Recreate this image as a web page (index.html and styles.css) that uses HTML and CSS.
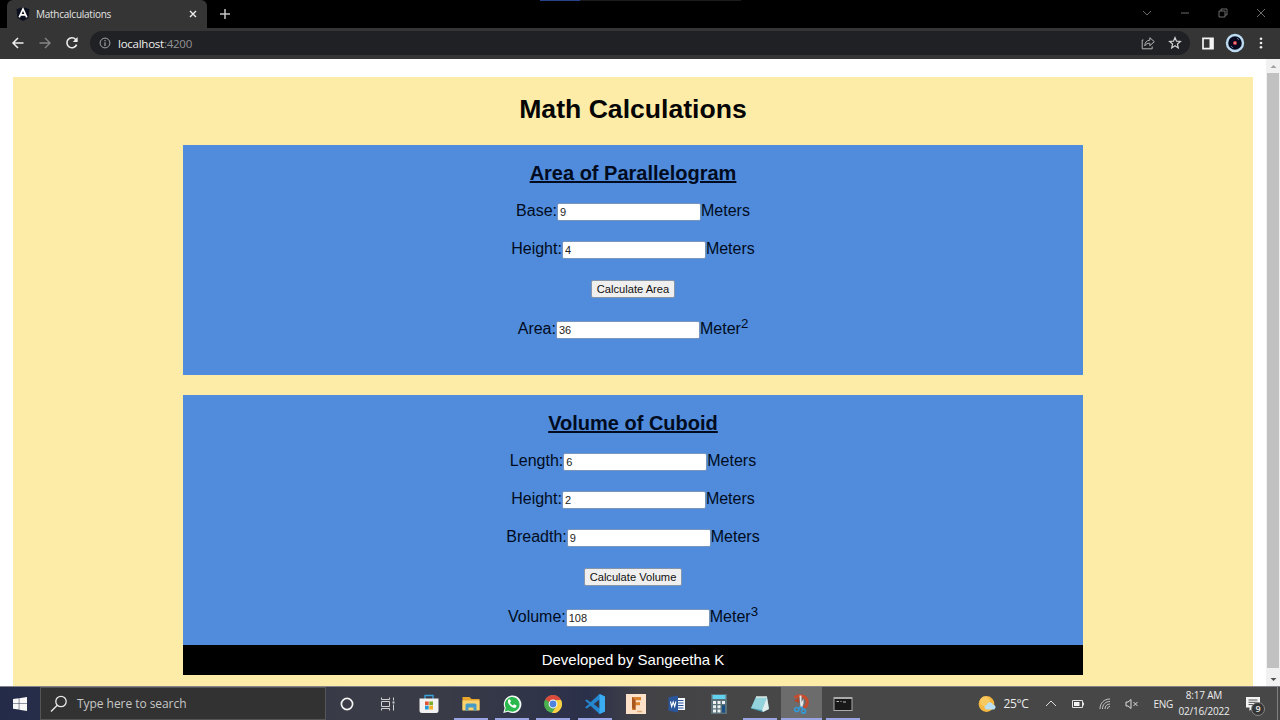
FILE: index.html
```html
<!DOCTYPE html>
<html lang="en">
<head>
<meta charset="utf-8">
<title>Mathcalculations</title>
<link rel="stylesheet" href="styles.css">
</head>
<body>
<div class="screen">
  <header class="tabs">
    <div class="tab">
      <svg class="favicon" width="14" height="14" viewBox="0 0 14 14"><path d="M7 0 13.5 2.3 12.5 11 7 14 1.5 11 .5 2.3Z" fill="#0b1020"/><path d="M3.2 10.3 7 2l3.8 8.300M4.700 7.900h4.600" fill="none" stroke="#fff" stroke-width="1.7"/></svg>
      <span class="tab-title">Mathcalculations</span>
      <svg width="8" height="8" viewBox="0 0 8 8"><path d="m1 1 6 6M7 1 1 7" stroke="#eee" stroke-width="1.4"/></svg>
    </div>
    <svg class="new-tab" width="12" height="12" viewBox="0 0 12 12"><path d="M6 1v10M1 6h10" stroke="#c4c4c4" stroke-width="1.5"/></svg>
    <div class="top-line"></div>
    <div class="window-controls">
      <svg width="10" height="10" viewBox="0 0 10 10"><path d="m1 3 4 4 4-4"/></svg>
      <svg width="10" height="10" viewBox="0 0 10 10"><path d="M1 5h8"/></svg>
      <svg width="10" height="10" viewBox="0 0 10 10"><path d="M1 3h6v6H1zM3 3V1h6v6H7"/></svg>
      <svg width="10" height="10" viewBox="0 0 10 10"><path d="m1 1 8 8M9 1 1 9"/></svg>
    </div>
  </header>
  <nav class="toolbar">
    <svg class="nav-icon" width="14" height="14" viewBox="0 0 14 14"><path d="M12.5 7H2M7 2 2 7l5 5" fill="none" stroke="#eee" stroke-width="1.5"/></svg>
    <svg class="nav-icon" width="14" height="14" viewBox="0 0 14 14"><path d="M1.5 7H12M7 2l5 5-5 5" fill="none" stroke="#858585" stroke-width="1.4"/></svg>
    <svg class="nav-icon" width="14" height="14" viewBox="0 0 14 14"><path d="M11.6 8.6A5 5 0 1 1 10.7 3.5L12 4.9" fill="none" stroke="#eee" stroke-width="1.6"/><path d="M12.6 1v5H7.800Z" fill="#eee"/></svg>
    <div class="address">
      <svg width="12" height="12" viewBox="0 0 12 12"><circle cx="6" cy="6" r="4.9" fill="none" stroke="#a3a3a6"/><path d="M6 5.3V9M6 3v1.3" stroke="#a3a3a6" stroke-width="1.2"/></svg>
      <span class="url">localhost<span class="port">:4200</span></span>
      <svg class="share" width="14" height="14" viewBox="0 0 14 14"><path d="M2.500 4H1.200v8.800h10v-2.300M3.800 9.800C4 6.200 5.800 4.300 8.800 4.200V1.700L13.300 5.700l-4.500 4V7.200C6.500 7.200 5 8 3.800 9.800Z" fill="none" stroke="#b5b5b5" stroke-linejoin="round"/></svg>
      <svg width="14" height="14" viewBox="0 0 14 14"><path d="m7 1.600 1.500 3.600 3.900.3-3 2.500.9 3.900L7 9.800l-3.300 2.100.9-3.900-3-2.500 3.900-.3Z" fill="none" stroke="#d2d2d2" stroke-width="1.200"/></svg>
    </div>
    <svg class="side-panel" width="12" height="13" viewBox="0 0 12 13"><path d="M1 1.300h10v10.400H1z" fill="none" stroke="#f4f4f4" stroke-width="1.700"/><path d="M7.500 1H11v11H7.500z" fill="#f4f4f4"/></svg>
    <svg class="profile" width="20" height="20" viewBox="0 0 20 20"><circle cx="10" cy="10" r="8" fill="#090b20" stroke="#bcdcf2" stroke-width="2.400"/><path d="m12 5 2 2M6 13l2 2" stroke="#60718b"/><circle cx="10" cy="10" r="2" fill="#d9353f"/><circle cx="10" cy="10" r=".7" fill="#fff"/></svg>
    <svg width="4" height="14" viewBox="0 0 4 14" fill="#eee"><circle cx="2" cy="2.700" r="1.300"/><circle cx="2" cy="7" r="1.300"/><circle cx="2" cy="11.300" r="1.300"/></svg>
  </nav>

  <div class="viewport">
    <main class="page">
      <h1 class="title">Math Calculations</h1>
      <section class="card area">
        <h2 class="subtitle">Area of Parallelogram</h2>
        <div class="row"><label>Base:</label><input class="field" value="9"><span>Meters</span></div>
        <div class="row"><label>Height:</label><input class="field" value="4"><span>Meters</span></div>
        <div class="action"><button class="calculate">Calculate Area</button></div>
        <div class="row result"><label>Area:</label><input class="field" value="36"><span>Meter<sup class="power">2</sup></span></div>
      </section>
      <section class="card volume">
        <h2 class="subtitle">Volume of Cuboid</h2>
        <div class="row"><label>Length:</label><input class="field" value="6"><span>Meters</span></div>
        <div class="row"><label>Height:</label><input class="field" value="2"><span>Meters</span></div>
        <div class="row"><label>Breadth:</label><input class="field" value="9"><span>Meters</span></div>
        <div class="action"><button class="calculate">Calculate Volume</button></div>
        <div class="row result"><label>Volume:</label><input class="field" value="108"><span>Meter<sup class="power">3</sup></span></div>
      </section>
      <footer class="credit">Developed by Sangeetha K</footer>
    </main>
    <div class="scrollbar">
      <svg width="13" height="14" viewBox="0 0 13 14"><path d="m3.500 9 3-3 3 3Z" fill="#a0a0a0"/></svg>
      <div class="thumb"></div>
      <svg width="13" height="18" viewBox="0 0 13 18"><path d="m3.500 10 3 3 3-3Z" fill="#505050"/></svg>
    </div>
  </div>

  <div class="taskbar">
    <div class="start"><svg width="14" height="14" viewBox="0 0 14 14" fill="#f7f7f7"><path d="M0 2.100 5.800 1.300v5.300H0zM6.300 1.200 14 0v6.600H6.300zM0 7.100h5.800v5.400L0 11.700zM6.300 7.100H14V14l-7.700-1.300z"/></svg></div>
    <div class="search">
      <svg width="18" height="18" viewBox="0 0 18 18"><circle cx="11" cy="6.500" r="5.200" fill="none" stroke="#e8e8e8" stroke-width="1.300"/><path d="M7.300 10.300 1 16.500" stroke="#e8e8e8" stroke-width="1.400"/></svg>
      <span class="search-text">Type here to search</span>
    </div>
    <div class="apps">
      <div class="app"><svg width="20" height="20" viewBox="0 0 20 20"><circle cx="10" cy="10" r="5.600" fill="none" stroke="#f2f2f2" stroke-width="1.700"/></svg></div>
      <div class="app"><svg width="20" height="20" viewBox="0 0 20 20" fill="none" stroke="#d0d0d0"><path d="M3.500 3.500v2h8v-2M3.500 7.500h8v5h-8zM3.500 16.500v-2h8v2M15.500 3.500v3M15.500 10.500v6"/><path d="M14.500 8.500h2" stroke-width="2"/></svg></div>
      <div class="app"><svg width="20" height="20" viewBox="0 0 20 20"><path d="M6 5V1.500h8V5" fill="none" stroke="#39a5dc" stroke-width="1.300"/><path d="M.5 4.500h19v12a2.500 2.500 0 0 1-2.500 2.500H3a2.500 2.500 0 0 1-2.500-2.500z" fill="#f2f2f2"/><path d="M6 7.500h3.700v3.700H6z" fill="#e35232"/><path d="M10.300 7.500H14v3.700h-3.700z" fill="#7bad28"/><path d="M6 11.800h3.700v3.700H6z" fill="#2599d6"/><path d="M10.300 11.800H14v3.700h-3.700z" fill="#f2ae22"/></svg></div>
      <div class="app open"><svg width="20" height="20" viewBox="0 0 20 20"><path d="M1.500 3h7l2 2h8v11h-17z" fill="#e9a52c"/><path d="M1.500 6.500h17v10h-17z" fill="#f9d36f"/><path d="M4.500 16.500v-5.500a1.500 1.500 0 0 1 1.500-1.500h8a1.500 1.500 0 0 1 1.500 1.500v5.500h-3v-3h-5v3z" fill="#459bc5"/></svg></div>
      <div class="app open"><svg width="20" height="20" viewBox="0 0 20 20"><path d="m1.300 19 1.300-5A8.800 8.800 0 1 1 6 17.800Z" fill="#f3f8f4"/><path d="m2.800 17.500 1-3.700A7.300 7.300 0 1 1 6.300 16.500Z" fill="#2bb84c"/><path d="M6.500 5.500 8 5.300l1 2.300-1 1.200c.7 1.300 1.600 2.100 3 2.700l1.200-1.200 2.300 1.100-.2 1.500c-1 1.500-3.500 1.100-5.800-.9S5.200 7.100 6.500 5.500Z" fill="#fff"/></svg></div>
      <div class="app open"><svg width="20" height="20" viewBox="0 0 20 20"><circle cx="10" cy="10" r="9" fill="#4bae4f"/><path d="M10 10 2.200 5.500A9 9 0 0 1 17.800 5.500L18 6H10Z" fill="#dc4a3d"/><path d="M10 10 13.500 6H18a9 9 0 0 1-9 13l4.400-7Z" fill="#fbd047"/><circle cx="10" cy="10" r="4.400" fill="#fff"/><circle cx="10" cy="10" r="3.400" fill="#4f83df"/></svg></div>
      <div class="app open"><svg width="20" height="20" viewBox="0 0 20 20"><path d="M14.500 0 20 2.600v14.800L14.500 20 5.500 11.700 1.800 14.600 0 13.500 4.100 10 0 6.500l1.800-1.100 3.700 2.900Z" fill="#2587cf"/><path d="M14.500 5.500v9L8.700 10Z" fill="#2f3447"/><path d="M14.500 0 20 2.600v14.800L14.500 20Z" fill="#3bacf1"/></svg></div>
      <div class="app"><svg width="20" height="20" viewBox="0 0 20 20"><path d="M0 0h20v20H0z" fill="#fce1c8"/><path d="M6 3h9v3.200H9.500v2H14v3H9.500V16H6z" fill="#d9822f"/><path d="m6 3 3.500 3.200V16L6 14Z" fill="#a95522"/><path d="M11 17.500h5" stroke="#dfaa75" stroke-width="1.500"/></svg></div>
      <div class="app"><svg width="20" height="20" viewBox="0 0 20 20"><path d="M9 4h9v12H9z" fill="#f4f7fb"/><path d="M11 6.500h5.500M11 9h5.500M11 11.500h5.500M11 14h5.500" stroke="#2b579a"/><path d="M1.500 3.200 11 1.500v17l-9.500-1.800z" fill="#2b579a"/><path d="m3.500 7.500 1.200 5 1.500-4.500 1.500 4.500 1.200-5" fill="none" stroke="#fff" stroke-width="1.100"/></svg></div>
      <div class="app"><svg width="20" height="20" viewBox="0 0 20 20"><path d="M2 0h16v20H2z" fill="#5a7179"/><path d="M3.500 1h13v4h-13z" fill="#63d2ee"/><path d="M4 7h3v3H4zM8.500 7h3v3h-3zM13 7h3v3h-3zM4 11.300h3v3H4zM8.500 11.300h3v3h-3zM4 15.600h3v3H4zM8.500 15.600h3v3h-3z" fill="#ecf0f1"/><path d="M13 11.300h3v7.300h-3z" fill="#194e86"/></svg></div>
      <div class="app open"><svg width="20" height="20" viewBox="0 0 20 20"><path d="M6 3h11l2 12-6 3-12-3.500Z" fill="#4b9fb4"/><path d="M6 3h11l-5 13L1 14Z" fill="#93d3dc"/><path d="m17 3 2 12-6 3-1-2Z" fill="#e1eeee"/><path d="M6 3h11" stroke="#dbe8e4" stroke-width="1.500"/></svg></div>
      <div class="app open active"><svg width="20" height="20" viewBox="0 0 20 20"><path d="M3.500 3.500C10-.5 16.300 3 16.300 8c0 3-1.500 4.800-3.800 5.500" fill="none" stroke="#c84b2b" stroke-width="3"/><path d="M3 6.500 8 4v5Z" fill="#b94222"/><path d="m8.500 1.500 2 0v6.500l2-3v4.500L11 14H9.500Z" fill="#e4e5e5"/><g fill="none" stroke="#3499d4" stroke-width="1.700"><path d="M9.500 12.500 7.800 15M10.500 12.500l1.500 3"/><circle cx="5.800" cy="15.500" r="2"/><circle cx="12.500" cy="17.200" r="2"/></g></svg></div>
      <div class="app open"><svg width="20" height="20" viewBox="0 0 20 20"><path d="M.5 3h19v14H.5z" fill="#aaa"/><path d="M1.500 5h17v11h-17z" fill="#181818"/><path d="M3.500 7.500H6M7.500 7.500h1M10 8h3" stroke="#bbb"/></svg></div>
    </div>
    <div class="weather">
      <svg width="18" height="18" viewBox="0 0 18 18"><circle cx="8.500" cy="9" r="7.900" fill="#f5b63f"/><circle cx="7" cy="6.500" r="5" fill="#f8c95f"/><path d="M9 14.500c-3 0-3.500-4-.2-4.500 1-4 5.500-3.300 6.200-.2 3.500.2 3.200 4.700 0 4.700Z" fill="#b9dff0"/></svg>
      <span>25°C</span>
    </div>
    <div class="tray">
      <svg width="12" height="12" viewBox="0 0 12 12"><path d="m1 8 5-5 5 5" fill="none" stroke="#ddd"/></svg>
      <svg width="14" height="12" viewBox="0 0 14 12"><path d="M1.500 2.500h10v7h-10zM12.500 4.500v3" fill="none" stroke="#e3e3e3"/><path d="M3 4h5.500v4H3z" fill="#f3f3f3"/></svg>
      <svg width="12" height="12" viewBox="0 0 12 12" fill="none" stroke="#c6c6c6"><path d="M1 11C1 5 5 1 11 1M3.500 11C3.500 6.500 6.500 3.500 11 3.500M6 11c0-3 2-5 5-5M8.500 11c0-1.500 1-2.500 2.500-2.500"/></svg>
      <svg width="14" height="12" viewBox="0 0 14 12" fill="none" stroke="#ddd"><path d="M1 4h2l3-2.500v9L3 8H1zM8.500 4l4 4M12.500 4l-4 4"/></svg>
      <span class="lang">ENG</span>
    </div>
    <div class="clock"><span>8:17 AM</span><span>02/16/2022</span></div>
    <div class="notices">
      <svg width="14" height="14" viewBox="0 0 14 14"><path d="M0 0h14v10.500H7L3.500 14v-3.500H0z" fill="#f4f4f4"/><path d="M2.500 3h9M2.500 5.300h9M2.500 7.600h5" stroke="#505050"/></svg>
      <span class="badge">9</span>
    </div>
  </div>
</div>
</body>
</html>
```
FILE: styles.css
```css
* { box-sizing: border-box; }
body { margin: 0; font-family: "Liberation Sans", Arial, sans-serif; }
svg { display: block; flex: none; }
.screen { display: flex; flex-direction: column; width: 1280px; height: 720px; overflow: hidden; background: #fff; }
.tabs, .toolbar, .taskbar { font-family: "Open Sans", "Noto Sans", sans-serif; }
.tabs { display: flex; align-items: center; height: 28px; flex: none; background: #000; }
.tab { display: flex; align-items: center; width: 200px; height: 28px; margin-left: 7px; padding: 0 10px 0 9px; border-radius: 6px 6px 0 0; background: #353535; color: #e4e4e4; }
.favicon { margin-right: 6px; }
.tab-title { flex: 1; font-size: 10px; letter-spacing: -.25px; white-space: nowrap; }
.new-tab { margin-left: 12px; }
.top-line { width: 201px; height: 1px; margin-left: 309px; align-self: flex-start; background: linear-gradient(to right, #29418a 0 40px, #1b1b1b 40px); }
.window-controls { display: flex; gap: 28px; margin: -3px 14px 0 auto; fill: none; stroke: #777; stroke-width: .9; }
.toolbar { display: flex; align-items: center; height: 31px; flex: none; padding: 0 16px 1px 11px; background: #353535; }
.nav-icon { margin-right: 13px; }
.address { display: flex; align-items: center; width: 1100px; height: 24px; margin-left: -2px; padding: 0 8px 0 9px; border-radius: 12px; background: #202124; }
.url { flex: 1; margin-left: 7px; color: #eee; font-size: 11.5px; letter-spacing: -.25px; }
.port { color: #949494; }
.share { margin-right: 13px; }
.side-panel { margin-left: 12px; }
.profile { margin: 0 14px 0 11px; }
.viewport { display: flex; justify-content: space-between; height: 627px; flex: none; }
.page { display: flex; flex-direction: column; align-items: center; width: 1240px; margin: 18px 0 0 13px; background: #fdeca7; color: #000b20; }
.title { margin: 16px 0 19px; color: #050505; font-size: 26.6px; line-height: 33px; }
.card { display: flex; flex-direction: column; align-items: center; width: 900px; flex: none; padding-top: 16px; background: #508bdc; }
.area { height: 230px; margin-bottom: 20px; }
.volume { height: 250px; }
.subtitle { margin: 0 0 16px; font-size: 20px; line-height: 24px; text-decoration: underline; text-decoration-thickness: 2px; }
.row { display: flex; align-items: baseline; height: 38.2px; flex: none; font-size: 16px; line-height: 20px; white-space: nowrap; }
.field { width: 144px; height: 18px; padding: 1px 2px; border: 1px solid #7795bd; border-radius: 2px; background: #fff; color: #222; font-family: inherit; font-size: 11px; line-height: 14px; }
.action { height: 36px; padding-top: 2.5px; flex: none; }
.calculate { display: block; height: 18px; padding: 0 5px; border: 1px solid #8795a9; border-radius: 2px; background: #efefef; color: #111; font-family: inherit; font-size: 11.15px; line-height: 14px; }
.result { padding-top: 5.7px; }
.power { font-size: 13.3px; line-height: 0; }
.credit { width: 900px; height: 30px; background: #000; color: #fff; font-size: 15px; line-height: 30px; text-align: center; }
.scrollbar { display: flex; flex-direction: column; width: 14px; padding-left: 1px; background: #f1f1f1; }
.thumb { width: 12px; flex: 1; background: #c1c1c1; }
.taskbar { display: flex; height: 34px; flex: none; border-top: 1px solid #85838a; background: linear-gradient(to right, #242b49 0, #393b47 27%, #393b47 35%, #2b304a 46%, #424246 50%, #474747 60%); color: #ececec; }
.start { display: flex; width: 40px; align-items: center; justify-content: center; }
.search { display: flex; align-items: center; width: 286px; padding-left: 9px; border: 1px solid #555; background: #323232; }
.search-text { margin-left: 9px; color: #c7c7c7; font-size: 12px; letter-spacing: -.05px; }
.apps { display: flex; }
.app { display: flex; align-items: center; justify-content: center; width: 41.35px; border-bottom: 2px solid transparent; padding-top: 2px; }
.open { background: linear-gradient(#9ba5e4, #9ba5e4) center bottom / 34px 2px no-repeat; background-origin: border-box; }
.active { background-color: #6c6c6c; background-size: 100% 2px; }
.weather { display: flex; align-items: center; gap: 7px; width: 67px; margin-left: 115px; font-size: 12px; letter-spacing: -.4px; }
.tray { display: flex; align-items: center; gap: 14px; width: 129px; }
.lang { font-size: 10px; letter-spacing: -.3px; }
.clock { display: flex; flex-direction: column; align-items: center; justify-content: center; width: 57px; margin-left: 1px; font-size: 10px; letter-spacing: -.2px; line-height: 15.5px; white-space: nowrap; }
.notices { position: relative; width: 32px; margin: 0 2px 0 auto; padding-top: 10px; border-right: 1px solid #818181; }
.badge { position: absolute; left: 5px; top: 15px; width: 14px; height: 14px; border: 1px solid #888; border-radius: 50%; background: #353535; font-size: 9px; font-weight: 600; line-height: 12px; text-align: center; }
```
